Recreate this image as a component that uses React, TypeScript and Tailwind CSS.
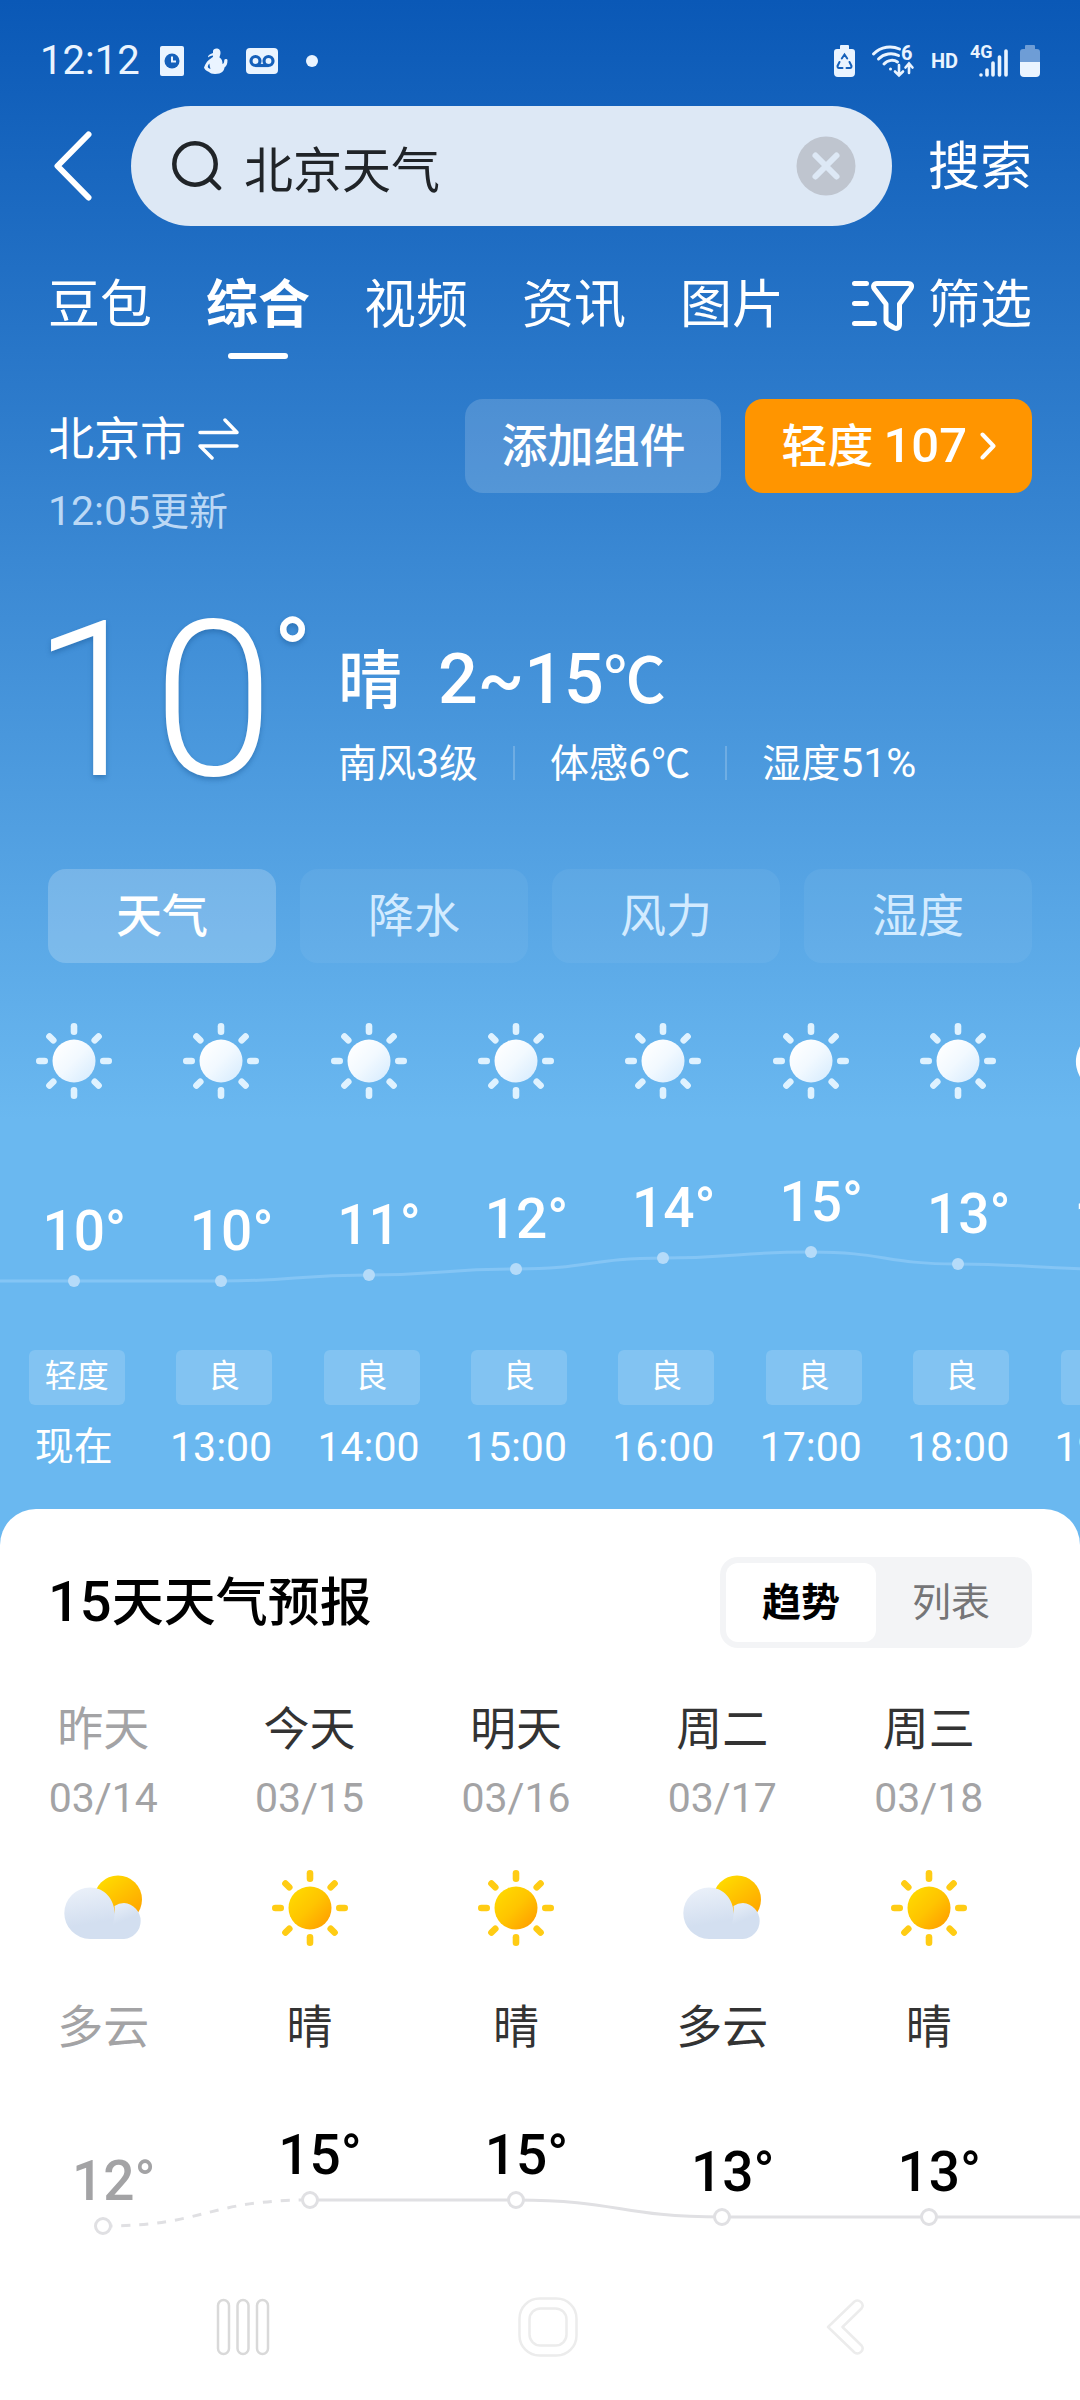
interface Hour {
  time: string
  temp: number
  air: string
  night?: boolean
}

interface Day {
  name: string
  date: string
  sky: string
  temp: number
  past?: boolean
}

const hours: Hour[] = [
  { time: "现在", temp: 10, air: "轻度" },
  { time: "13:00", temp: 10, air: "良" },
  { time: "14:00", temp: 11, air: "良" },
  { time: "15:00", temp: 12, air: "良" },
  { time: "16:00", temp: 14, air: "良" },
  { time: "17:00", temp: 15, air: "良" },
  { time: "18:00", temp: 13, air: "良" },
  { time: "19:00", temp: 12, air: "良", night: true }
]

const days: Day[] = [
  { name: "昨天", date: "03/14", sky: "多云", temp: 12, past: true },
  { name: "今天", date: "03/15", sky: "晴", temp: 15 },
  { name: "明天", date: "03/16", sky: "晴", temp: 15 },
  { name: "周二", date: "03/17", sky: "多云", temp: 13 },
  { name: "周三", date: "03/18", sky: "晴", temp: 13 }
]

const hourY = (temp: number) => Math.round(182 - (temp - 10) * 5.8)
const dayY = (temp: number) => Math.round(176 - (temp - 12) * 8.7)

// smooth line through points, flat at every point
const curve = (points: number[][]) =>
  points.map(([x, y], i) => {
    if (i === 0) return `M${x} ${y}`
    const [px, py] = points[i - 1]
    const mid = (px + x) / 2
    return `C${mid} ${py} ${mid} ${y} ${x} ${y}`
  }).join(" ")

const hourPoints = [[0, 182], ...hours.map((h, i) => [73.7 + 147.4 * i, hourY(h.temp)])]
const dayPoints = days.map((d, i) => [103.2 + 206.4 * i, dayY(d.temp)])

const Sun = ({ tone }: { tone: "white" | "gold" }) => (
  <svg viewBox="0 0 76 76" className="h-[76px] w-[76px]">
    <defs>
      <linearGradient id={`sun-${tone}`} x1="0.1" y1="0.1" x2="0.9" y2="0.9">
        <stop offset="0" stopColor={tone === "gold" ? "#ffd900" : "#ffffff"} />
        <stop offset="0.5" stopColor={tone === "gold" ? "#ffc400" : "#f2f9ff"} />
        <stop offset="1" stopColor={tone === "gold" ? "#ffa000" : "#d9edfe"} />
      </linearGradient>
    </defs>
    <circle cx="38" cy="38" r="21.5" fill={`url(#sun-${tone})`} />
    {[0, 45, 90, 135, 180, 225, 270, 315].map(a => (
      <rect key={a} x="34.7" y="0" width="6.6" height="12" rx="3.3" transform={`rotate(${a} 38 38)`} fill={tone === "gold" ? "#ffcc14" : "#dff2ff"} />
    ))}
  </svg>
)

const Moon = () => (
  <svg viewBox="0 0 76 76" className="h-[76px] w-[76px]">
    <path d="M44 8A31 31 0 1 0 69 46A25 25 0 0 1 44 8Z" fill="#fff" />
  </svg>
)

const Cloudy = () => (
  <svg viewBox="0 0 78 76" className="h-[76px] w-[78px]">
    <defs>
      <linearGradient id="cloud-sun" x1="0.2" y1="0.1" x2="0.8" y2="0.9">
        <stop offset="0" stopColor="#ffd900" />
        <stop offset="1" stopColor="#ffa400" />
      </linearGradient>
      <linearGradient id="cloud-big" x1="0.3" y1="0" x2="0.5" y2="1">
        <stop offset="0" stopColor="#eaf0f9" />
        <stop offset="0.7" stopColor="#d3dff0" />
        <stop offset="1" stopColor="#d3dff0" />
      </linearGradient>
      <linearGradient id="cloud-small" x1="0" y1="0" x2="0.4" y2="1">
        <stop offset="0" stopColor="#edf3fb" />
        <stop offset="0.6" stopColor="#d3dff0" />
      </linearGradient>
    </defs>
    <circle cx="54" cy="29.500" r="24" fill="url(#cloud-sun)" />
    <path d="M26 17.500a25.700 25.700 0 0 0 0 51.400H60V44H51C50 29 41 17.500 26 17.500Z" fill="url(#cloud-big)" />
    <path d="M60 33a18 18 0 0 0-9.500 3C52 47 48 60 42 68.900H60a18 18 0 0 0 0-35.900Z" fill="url(#cloud-small)" />
  </svg>
)

// the number sits on the column centre and the degree sign hangs off its right side
const Temp = ({ value }: { value: number }) => (
  <div className="flex h-14 justify-center text-[55px] leading-[56px] font-medium">
    {value}
    <span className="w-0 overflow-visible">°</span>
  </div>
)

const StatusBar = () => (
  <div className="flex items-center px-10 pt-10 text-[#eaf4ff]">
    <span className="text-[40px] leading-[42px]">12:12</span>
    <svg viewBox="0 0 24 30" className="ml-5 h-[30px] w-6" fill="none">
      <rect width="24" height="30" rx="2" fill="#eaf4ff" />
      <circle cx="12" cy="15" r="7.500" fill="#1560ba" />
      <path d="M12 10.500V15.500H16" stroke="#eaf4ff" strokeWidth="2" />
    </svg>
    <svg viewBox="0 0 24 28" className="ml-5 h-7 w-6" fill="#eaf4ff">
      <path d="M9 4C9 .5 17 0 16.500 6C16.500 8 15.500 9 15.500 10.500C18 12 18.500 14 18.500 17C20.500 16.500 20 14 20.500 12.500C21.500 11.500 23 12 23.500 13C23.500 17 22.500 19 20.500 20.500C20 24 18 27 11 27C8 27 6 26 5 25C2 24 .5 22 0 20.500C1.500 16 4 13 7.500 11C8 10.500 9.500 10 9 8.500C7 8.500 5 9.500 4 10.500C3.500 9 5.500 7 9 6ZM5.500 16.500C4 18 3.500 19.500 4 20.500C4.500 21.500 6 21.500 6.500 22C6 20 5.500 18.500 5.500 16.500Z" />
    </svg>
    <svg viewBox="0 0 32 26" className="ml-[18px] h-[26px] w-8" fill="none">
      <rect width="32" height="26" rx="4" fill="#eaf4ff" />
      <circle cx="9.500" cy="13" r="4.500" stroke="#1560ba" strokeWidth="3.200" />
      <circle cx="22.500" cy="13" r="4.500" stroke="#1560ba" strokeWidth="3.200" />
      <path d="M9.500 17.500H22.500" stroke="#1560ba" strokeWidth="3.200" />
    </svg>
    <span className="ml-7 h-3 w-3 rounded-full bg-[#eaf4ff]"></span>
    <div className="ml-auto flex items-center">
      <svg viewBox="0 0 21 32" className="h-8 w-[21px]" fill="none">
        <path d="M6 1a1 1 0 0 1 1-1H14a1 1 0 0 1 1 1V4H18a3 3 0 0 1 3 3V28a4 4 0 0 1-4 4H4a4 4 0 0 1-4-4V7A3 3 0 0 1 3 4H6Z" fill="#eaf4ff" />
        <path d="M7.800 13.500L10.500 9.500L13.200 13.500M15.500 17L17.500 21C17.500 22.500 17 23 16 23H12.500M5.500 17L3.500 21C3.500 22.500 4 23 5 23H8.500" stroke="#1560ba" strokeWidth="2" strokeLinecap="round" />
      </svg>
      <svg viewBox="0 0 42 32" className="ml-[17px] h-8 w-[42px] overflow-visible" fill="none" stroke="#eaf4ff" strokeWidth="3" strokeLinecap="round">
        <path d="M1.500 9C9 1 20 .5 27.500 4M6.500 14C12 8.500 20 7.500 26.500 10.500M12 19C16 14.500 22 14.500 25.500 17" />
        <circle cx="18.500" cy="24" r="1.500" fill="#eaf4ff" stroke="none" />
        <path d="M27 20V30M23 26.500L27 30.500L31 26.500M37 28V19M33.500 22.500L37 18.500L40.500 22.500" strokeWidth="2.600" />
        <text x="29" y="14.500" fill="#eaf4ff" stroke="none" className="font-[Roboto] text-[20px] font-bold">6</text>
      </svg>
      <span className="ml-[17px] text-[20px] leading-8 font-bold">HD</span>
      <svg viewBox="0 0 38 32" className="ml-3 h-8 w-[38px] overflow-visible" stroke="#eaf4ff" strokeWidth="3.600" strokeLinecap="round">
        <text x="0" y="13" fill="#eaf4ff" stroke="none" className="font-[Roboto] text-[18px] font-bold">4G</text>
        <path d="M11 30V30M17 25V30M23 18V30M29.500 12V30M36 6V30" />
      </svg>
      <svg viewBox="0 0 20 32" className="ml-3 h-8 w-5">
        <path d="M5 1a1 1 0 0 1 1-1H14a1 1 0 0 1 1 1V4H17a3 3 0 0 1 3 3V17H0V7A3 3 0 0 1 3 4H5Z" fill="#6e9dd6" />
        <path d="M0 17H20V28a4 4 0 0 1-4 4H4a4 4 0 0 1-4-4Z" fill="#eaf4ff" />
      </svg>
    </div>
  </div>
)

const SearchBar = () => (
  <form className="mt-6 flex items-center pr-12 pl-[54px]">
    <button type="button" aria-label="返回">
      <svg viewBox="0 0 38 70" className="h-[70px] w-[38px]" fill="none" stroke="#fff" strokeWidth="6" strokeLinecap="round" strokeLinejoin="round">
        <path d="M34.500 3.500L3.500 35L34.500 66.500" />
      </svg>
    </button>
    <div className="ml-[39px] flex h-[120px] min-w-0 flex-1 items-center rounded-full bg-[#dde8f5] pr-9 pl-[41px]">
      <svg viewBox="0 0 50 50" className="h-[50px] w-[50px] shrink-0" fill="none" stroke="#202428" strokeWidth="4.500" strokeLinecap="round">
        <circle cx="23" cy="23" r="20.700" />
        <path d="M38 38L47 47" />
      </svg>
      <input aria-label="搜索" defaultValue="北京天气" className="ml-[22px] h-20 min-w-0 flex-1 bg-transparent text-[49px] text-[#202428] outline-none" />
      <button type="button" aria-label="清除">
        <svg viewBox="0 0 60 60" className="h-[60px] w-[60px]">
          <circle cx="30" cy="30" r="29.500" fill="#bfc5cf" />
          <path d="M19.500 19.500L40.500 40.500M40.500 19.500L19.500 40.500" stroke="#dde8f5" strokeWidth="6" strokeLinecap="round" />
        </svg>
      </button>
    </div>
    <button type="button" className="ml-9 pt-1 text-[52px] leading-[64px]">搜索</button>
  </form>
)

const Tabs = () => (
  <nav className="mt-12 flex items-start px-12 text-[52px] leading-[64px]">
    <div className="flex items-start gap-[54px]">
      <button>豆包</button>
      <button className="flex flex-col items-center gap-[15px] font-bold">
        综合
        <span className="h-1.5 w-[60px] rounded-full bg-white"></span>
      </button>
      <button>视频</button>
      <button>资讯</button>
      <button>图片</button>
    </div>
    <button className="ml-auto flex items-center gap-3.5">
      <svg viewBox="0 0 62 50" className="h-[50px] w-[62px]" fill="none" stroke="#fff" strokeWidth="5" strokeLinecap="round" strokeLinejoin="round">
        <path d="M2.500 2.500H14.500M2.500 22.500H14.500M2.500 42.500H22.500" />
        <path d="M25 2.500H56C59.500 2.500 60.500 5 58.500 8L47.500 23V43C47.500 47 44.500 48.500 41.500 46.500L36.500 43.500C35 42.500 34 41.500 34 39.500V23L22.500 8C20.500 5 22 2.500 25 2.500Z" />
      </svg>
      筛选
    </button>
  </nav>
)

const Current = () => (
  <section>
    <div className="mt-10 flex items-start px-12">
      <div className="flex flex-col gap-3 pt-2.5">
        <button className="flex items-center gap-3 text-[46px] leading-[60px]">
          北京市
          <svg viewBox="0 0 41 42" className="h-[42px] w-[41px]" fill="none" stroke="#fff" strokeWidth="3.500" strokeLinecap="round" strokeLinejoin="round">
            <path d="M2 14.500H39L27 2M39 28H2L14 40" />
          </svg>
        </button>
        <div className="h-[60px] text-[41px] leading-[60px] text-[#bbd8f5]">12:05<span className="text-[39px]">更新</span></div>
      </div>
      <button className="ml-auto h-[94px] rounded-[18px] bg-white/16 px-9 text-[46px] font-medium">添加组件</button>
      <button className="ml-6 flex h-[94px] items-center rounded-[18px] bg-[#ff9500] px-9 text-[49px] font-medium">
        <span className="text-[46px]">轻度</span>
        <span className="ml-2.5">107</span>
        <svg viewBox="0 0 16 28" className="ml-[13px] h-7 w-4" fill="none" stroke="#fff" strokeWidth="4" strokeLinecap="round" strokeLinejoin="round">
          <path d="M2.500 2.500L13.500 14L2.500 25.500" />
        </svg>
      </button>
    </div>
    <div className="mt-20 flex items-start pr-12 pl-8">
      <div className="flex w-[306px] items-start text-[218px] leading-[160px] font-light text-shadow-[0_3px_5px_rgba(20,80,140,0.4)]">
        10<span className="text-[98px] leading-[66px] font-medium">°</span>
      </div>
      <div className="flex flex-col gap-5 pt-[18px]">
        <div className="flex h-20 items-baseline text-[70px] leading-[80px] font-medium">
          <span className="text-[64px]">晴</span>
          <span className="ml-9">2~15</span>
          <span className="text-[62px]">℃</span>
        </div>
        <div className="flex h-12 items-center text-[41px] leading-[48px]">
          <span><span className="text-[39px]">南风</span>3<span className="text-[39px]">级</span></span>
          <span className="mx-[35px] h-[34px] w-0.5 bg-white/20"></span>
          <span><span className="text-[39px]">体感</span>6<span className="text-[39px]">℃</span></span>
          <span className="mx-[35px] h-[34px] w-0.5 bg-white/20"></span>
          <span><span className="text-[39px]">湿度</span>51%</span>
        </div>
      </div>
    </div>
  </section>
)

const HourlyForecast = () => (
  <section>
    <div className="mt-[82px] grid grid-cols-4 gap-6 px-12 text-[46px]">
      <button className="h-[94px] rounded-[18px] bg-white/20 font-medium">天气</button>
      {["降水", "风力", "湿度"].map(name => (
        <button key={name} className="h-[94px] rounded-[18px] bg-white/5 text-[#d3ebff]">{name}</button>
      ))}
    </div>
    <div className="relative mt-[60px] flex overflow-hidden">
      <svg viewBox="0 0 1080 203" preserveAspectRatio="none" className="absolute top-[76px] left-0 h-[203px] w-full" fill="none">
        <path d={curve(hourPoints)} stroke="#84c5f5" strokeWidth="3" vectorEffect="non-scaling-stroke" />
      </svg>
      {hours.map(h => (
        <div key={h.time} className="relative flex shrink-0 basis-[13.65%] flex-col items-center">
          {h.night ? <Moon /> : <Sun tone="white" />}
          <div className="flex h-[203px] flex-col items-center gap-4" style={{ paddingTop: hourY(h.temp) - 78 }}>
            <Temp value={h.temp} />
            <span className="h-3 w-3 shrink-0 rounded-full bg-[#b5dbf9]"></span>
          </div>
          <div className="mt-12 pl-1.5">
            <div className="h-[55px] w-24 rounded-md bg-white/16 text-center text-[32px] leading-[52px]">{h.air}</div>
          </div>
          <div className={h.time.includes(":") ? "mt-3 text-[41px] leading-[60px]" : "mt-3 text-[39px] leading-[60px]"}>{h.time}</div>
        </div>
      ))}
    </div>
  </section>
)

const DailyForecast = () => (
  <section>
    <div className="flex items-center justify-between px-12">
      <h2 className="text-[56px] leading-[64px] font-medium">15<span className="text-[52px]">天天气预报</span></h2>
      <div className="flex rounded-[18px] bg-[#f3f4f6] p-1.5 text-[39px] leading-[74px]">
        <button className="h-[79px] w-[150px] rounded-xl bg-white font-bold">趋势</button>
        <button className="h-[79px] w-[150px] text-[#757577]">列表</button>
      </div>
    </div>
    <div className="relative mt-12 flex overflow-hidden">
      <svg viewBox="0 0 1080 200" preserveAspectRatio="none" className="absolute bottom-0 left-0 h-[200px] w-full" fill="none" stroke="#e0e0e3" strokeWidth="3">
        <path d={curve(dayPoints.slice(0, 2))} strokeDasharray="9 9" strokeDashoffset="-18" vectorEffect="non-scaling-stroke" />
        <path d={curve([...dayPoints.slice(1), [1080, dayY(13)]])} vectorEffect="non-scaling-stroke" />
      </svg>
      {days.map(d => (
        <div key={d.date} className={d.past ? "relative flex shrink-0 basis-[19.11%] flex-col items-center text-[#a3a3a5]" : "relative flex shrink-0 basis-[19.11%] flex-col items-center text-[#333]"}>
          <div className="text-[46px] leading-[66px]">{d.name}</div>
          <div className="mt-1.5 text-[41px] leading-[60px] text-[#a3a3a5]">{d.date}</div>
          <div className="mt-[42px]">{d.sky === "晴" ? <Sun tone="gold" /> : <Cloudy />}</div>
          <div className="mt-12 text-[46px] leading-[66px]">{d.sky}</div>
          <div className={d.past ? "flex h-[190px] flex-col items-center gap-2" : "flex h-[190px] flex-col items-center gap-2 text-black"} style={{ paddingTop: dayY(d.temp) - 83 }}>
            <Temp value={d.temp} />
            <span className="h-[18px] w-[18px] shrink-0 rounded-full border-3 border-[#e0e0e3] bg-white"></span>
          </div>
        </div>
      ))}
    </div>
  </section>
)

const SystemNav = () => (
  <nav className="mt-[47px] flex items-center justify-center gap-[248px] pb-10">
    <button aria-label="最近任务">
      <svg viewBox="0 0 54 58" className="h-[58px] w-[54px]" fill="none" stroke="#d9d9d9" strokeWidth="2.500">
        <rect x="2" y="2" width="11" height="54" rx="5.500" />
        <rect x="21.500" y="2" width="11" height="54" rx="5.500" />
        <rect x="41" y="2" width="11" height="54" rx="5.500" />
      </svg>
    </button>
    <button aria-label="主页">
      <svg viewBox="0 0 60 60" className="h-[60px] w-[60px]" fill="none" stroke="#ececec" strokeWidth="2.500">
        <rect x="1.500" y="1.500" width="57" height="57" rx="20" />
        <rect x="11.500" y="11.500" width="37" height="37" rx="11" />
      </svg>
    </button>
    <button aria-label="返回">
      <svg viewBox="0 0 38 56" className="h-14 w-[38px]" fill="none" stroke="#ececec" strokeWidth="2.500" strokeLinejoin="round">
        <path d="M2 28L28.500 2.500C33 -.5 39 5 35.500 9.500L16.500 28L35.500 46.500C39 51 33 56.500 28.500 53.500Z" />
      </svg>
    </button>
  </nav>
)

export default () => (
  <main className="flex min-h-screen flex-col overflow-hidden bg-[linear-gradient(to_bottom,#0a58b6_0px,#6ab8f0_1120px)] font-[Roboto,'Noto_Sans_CJK_SC',sans-serif] text-white">
    <StatusBar />
    <SearchBar />
    <Tabs />
    <Current />
    <HourlyForecast />
    <div className="mt-8 flex-1 rounded-t-[36px] bg-white pt-12 text-black">
      <DailyForecast />
      <SystemNav />
    </div>
  </main>
)
